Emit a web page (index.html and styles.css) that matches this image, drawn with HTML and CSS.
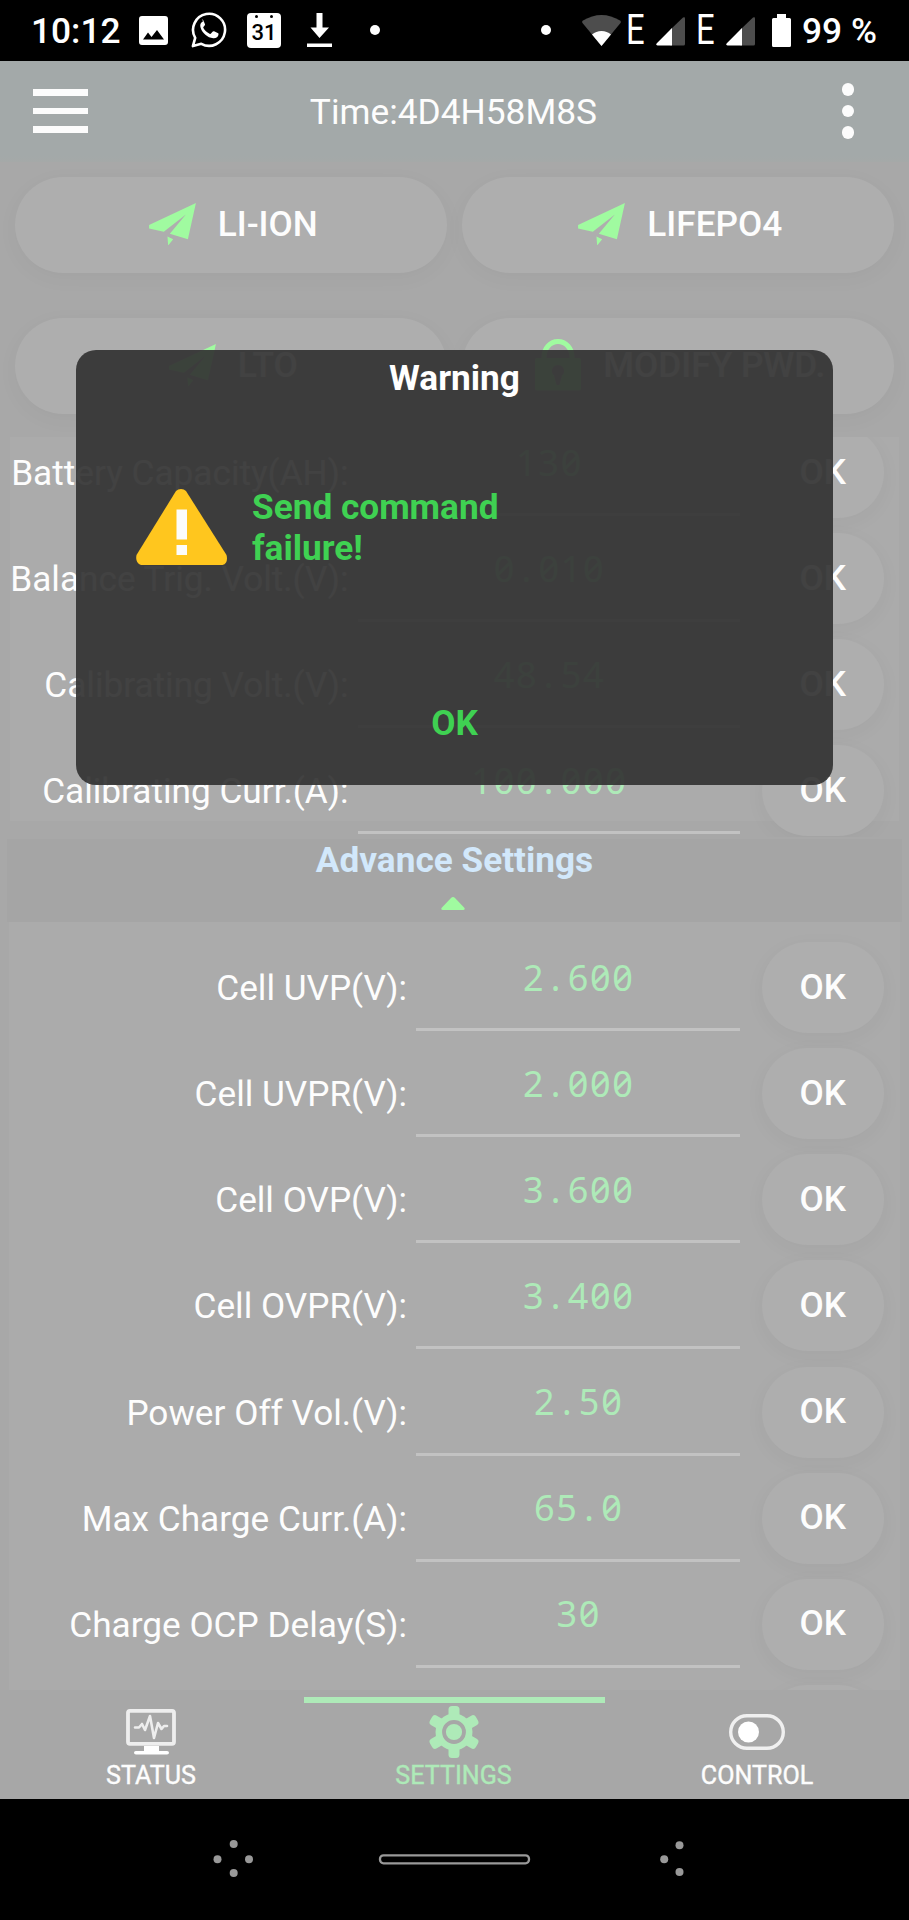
FILE: index.html
```html
<!DOCTYPE html>
<html lang="en">
<head>
<meta charset="utf-8">
<title>Battery settings</title>
<link rel="stylesheet" href="styles.css">
</head>
<body>
<svg class="defs" width="0" height="0">
  <symbol id="plane" viewBox="0 0 140 127"><path d="M140 0 0 66v10l44 10 66-52-48 58 54 16zM55 100l17 8-15 19z"/></symbol>
  <symbol id="signal" viewBox="0 0 29 29"><path fill="#4d4d4d" d="M27 .6Q29-.6 29 1.500V27q0 1.500-1.500 1.500H14V13z"/><path fill="#fff" d="M16 11v17.500H1.500Q-.5 28 .6 26.600z"/></symbol>
</svg>
<div class="screen">
  <header class="status">
    <span class="clock">10:12</span>
    <svg class="ic-photo" viewBox="0 0 29 29"><path fill="#fff" fill-rule="evenodd" d="M3 0h23q3 0 3 3v23q0 3-3 3H3q-3 0-3-3V3q0-3 3-3zM4 23.500h21L18 14l-5.500 7-3.500-4.500z"/></svg>
    <svg class="ic-chat" viewBox="0 0 36 36"><path fill="none" stroke="#fff" stroke-width="2.600" stroke-linejoin="round" d="M1.900 34.100 4.200 25.800A16 16 0 1 1 10.300 31.800z"/><path fill="#fff" d="M11.800 9.800c-3 1.200-3.500 4-2.600 6.600 1.800 5.200 6.600 9.600 12.600 10.300 2.800.2 5-1.500 5.200-3.700.1-.9 0-1.100-.8-1.500l-3.600-1.700c-.7-.3-1.100-.2-1.600.4l-1.500 1.800c-.4.5-.8.5-1.400.2-2.900-1.300-4.900-3.200-6.200-5.600-.3-.6-.2-.9.2-1.300l1.200-1.500c.3-.4.3-.8.1-1.300l-1.500-3.600c-.4-.8-.9-.9-1.600-.9z" transform="translate(.5 -.5)"/></svg>
    <span class="calendar"><i></i><i></i><b>31</b></span>
    <svg class="ic-down" viewBox="0 0 25 34"><path fill="#fff" d="M9.500 0h6v14.500H22L12.500 25 3.500 14.500h6zM0 30.500h25V34H0z"/></svg>
    <i class="dot"></i>
    <i class="dot dot-right"></i>
    <svg class="ic-wifi" viewBox="0 0 39 31"><path fill="#4d4d4d" d="M19.500 31 .5 8Q-.4 6.500 1 5.600 10 0 19.500 0T38 5.600q1.400.9.500 2.400z"/><path fill="#fff" d="M19.500 31 10 19.500Q14 16 19.500 16t9.500 3.500z"/></svg>
    <span class="edge"><span>E</span></span>
    <svg class="ic-signal"><use href="#signal"/></svg>
    <span class="edge"><span>E</span></span>
    <svg class="ic-signal"><use href="#signal"/></svg>
    <svg class="ic-battery" viewBox="0 0 19 33"><path fill="#fff" d="M5 0h9v4h3.500Q19 4 19 5.500v26q0 1.500-1.500 1.500h-16Q0 33 0 31.500v-26Q0 4 1.500 4H5z"/></svg>
    <span class="percent">99 %</span>
  </header>

  <div class="toolbar">
    <div class="menu"><i></i><i></i><i></i></div>
    <div class="title">Time:4D4H58M8S</div>
    <div class="more"><i></i><i></i><i></i></div>
  </div>

  <main>
    <div class="presets">
      <div class="pill"><svg class="plane"><use href="#plane"/></svg><span>LI-ION</span></div>
      <div class="pill"><svg class="plane"><use href="#plane"/></svg><span>LIFEPO4</span></div>
      <div class="pill"><svg class="plane"><use href="#plane"/></svg><span>LTO</span></div>
      <div class="pill"><svg class="lock" viewBox="0 0 46 52"><path fill="none" stroke="#a0fba0" stroke-width="5" d="M9 20v-2a14 15.500 0 0 1 28 0v2"/><path fill="#a0fba0" fill-rule="evenodd" d="M2 19h42q2 0 2 2v28.500q0 2-2 2H2q-2 0-2-2V21q0-2 2-2zM23 26a6 6 0 0 0-4 10.500L21.500 46h3l2.500-9.500A6 6 0 0 0 23 26z"/></svg><span>MODIFY PWD.</span></div>
    </div>

    <section class="basic"><div class="rows">
      <div class="row"><span class="label">Battery Capacity(AH):</span><span class="value">130</span><span class="ok">OK</span></div>
      <div class="row"><span class="label">Balance Trig. Volt.(V):</span><span class="value">0<i>.</i>010</span><span class="ok">OK</span></div>
      <div class="row"><span class="label">Calibrating Volt.(V):</span><span class="value">48<i>.</i>54</span><span class="ok">OK</span></div>
      <div class="row"><span class="label">Calibrating Curr.(A):</span><span class="value">100<i>.</i>000</span><span class="ok">OK</span></div>
    </div></section>

    <div class="divider"><h2>Advance Settings</h2><svg viewBox="0 0 24 13"><path fill="#a0fba0" d="M12 0q1 0 2 1l9.500 10q.8 2-1.500 2H2q-2.300 0-1.500-2L10 1q1-1 2-1z"/></svg></div>

    <section class="advanced">
      <div class="row"><span class="label">Cell UVP(V):</span><span class="value">2<i>.</i>600</span><span class="ok">OK</span></div>
      <div class="row"><span class="label">Cell UVPR(V):</span><span class="value">2<i>.</i>000</span><span class="ok">OK</span></div>
      <div class="row"><span class="label">Cell OVP(V):</span><span class="value">3<i>.</i>600</span><span class="ok">OK</span></div>
      <div class="row"><span class="label">Cell OVPR(V):</span><span class="value">3<i>.</i>400</span><span class="ok">OK</span></div>
      <div class="row"><span class="label">Power Off Vol.(V):</span><span class="value">2<i>.</i>50</span><span class="ok">OK</span></div>
      <div class="row"><span class="label">Max Charge Curr.(A):</span><span class="value">65<i>.</i>0</span><span class="ok">OK</span></div>
      <div class="row"><span class="label">Charge OCP Delay(S):</span><span class="value">30</span><span class="ok">OK</span></div>
      <div class="row"><span class="label"></span><span class="value"></span><span class="ok"></span></div>
    </section>
  </main>

  <nav class="tabs">
    <div class="tab">
      <svg viewBox="0 0 56 52"><g fill="none" stroke="#eee"><rect x="5" y="4.800" width="46" height="33" rx="2" stroke-width="3.800"/><path stroke-width="2.600" stroke-linejoin="round" stroke-linecap="round" d="M12 21.500h4l3-3.500 3 6 5-14 4 22 4-15 3.500 6 2.500-3h3"/></g><path fill="#fff" d="M21 40h15v5h8q2 0 2 1.700T44 48.500H13q-2 0-2-1.800t2-1.700h8z"/></svg>
      <span>STATUS</span>
    </div>
    <div class="tab active">
      <svg viewBox="0 0 56 52"><g fill="#aeeab8"><circle cx="28" cy="26" r="18.500"/><rect x="22.500" y="0" width="11" height="52" rx="3.500"/><rect x="22.500" y="-.5" width="11" height="53" rx="3.500" transform="rotate(60 28 26)"/><rect x="22.500" y="-.5" width="11" height="53" rx="3.500" transform="rotate(120 28 26)"/></g><circle cx="28" cy="26" r="10" fill="#aeeab8" stroke="#a7a7a7" stroke-width="3.800"/></svg>
      <span>SETTINGS</span>
    </div>
    <div class="tab">
      <svg viewBox="0 0 56 52"><rect x="1.700" y="9.700" width="52.600" height="32.600" rx="16.300" fill="none" stroke="#f0f0f0" stroke-width="3.400"/><circle cx="19.500" cy="26" r="10.500" fill="#fff"/></svg>
      <span>CONTROL</span>
    </div>
  </nav>

  <footer class="sysnav">
    <svg viewBox="0 0 909 121"><g fill="#999"><circle cx="233.700" cy="45" r="4"/><circle cx="217.500" cy="60.300" r="4"/><circle cx="249" cy="60.300" r="4"/><circle cx="233.700" cy="74" r="4"/><circle cx="679.500" cy="46.300" r="4"/><circle cx="664.200" cy="60.300" r="4"/><circle cx="679.500" cy="73" r="4"/></g><rect x="380" y="56.300" width="149" height="8" rx="3.500" fill="none" stroke="#999" stroke-width="2.300"/></svg>
  </footer>

  <div class="dialog">
    <div class="dialog-title">Warning</div>
    <div class="dialog-body">
      <svg viewBox="0 0 91 76"><path fill="#ffc61e" d="M40 2q2-2 5-2t5 2l40.500 64q2 8-4 10H5q-6-2-4.500-10z"/><path fill="#fcfcfc" d="M40.500 20.500h10.500v30H40.500zM40.500 56h10.500v10H40.500z"/></svg>
      <p>Send command<br>failure!</p>
    </div>
    <div class="dialog-ok">OK</div>
  </div>
</div>
</body>
</html>
```
FILE: styles.css
```css
* { box-sizing: border-box; }
body { margin: 0; background: #000; font-family: Roboto, sans-serif; color: #fdfdfd; }
i { font-style: normal; }
svg { display: block; flex: none; }
.defs { position: absolute; }
.screen { position: relative; width: 909px; height: 1920px; overflow: hidden; display: flex; flex-direction: column; background: #a8a8a8; }

.status { height: 60.500px; flex: none; background: #000; display: flex; align-items: center; padding-left: 31px; color: #fff; font-size: 35.300px; font-weight: 500; white-space: nowrap; }
.clock { width: 108px; padding-top: 2px; }
.ic-photo { width: 29px; height: 29px; }
.ic-chat { width: 36px; height: 36px; margin-left: 23px; }
.calendar { width: 34px; height: 35px; margin-left: 20px; background: #fff; border-radius: 4px; display: flex; flex-wrap: wrap; justify-content: space-between; padding: 2px 8px 0; color: #000; }
.calendar i { width: 3px; height: 3px; border-radius: 50%; background: #000; }
.calendar b { width: 34px; margin: 0 -8px; font-size: 22px; line-height: 25px; font-weight: 500; text-align: center; }
.ic-down { width: 25px; height: 34px; margin-left: 26px; }
.dot { width: 10px; height: 10px; border-radius: 50%; background: #fff; margin-left: 38px; }
.dot-right { margin-left: 161px; }
.ic-wifi { width: 39px; height: 31px; margin-left: 31px; }
.edge { width: 17px; margin-left: 5px; font-size: 42px; font-weight: 400; line-height: 60px; }
.edge span { display: inline-block; transform: scaleX(.78); transform-origin: 0 0; }
.ic-signal { width: 29px; height: 29px; margin-left: 13px; margin-top: 2px; }
.ic-signal + .edge { margin-left: 11px; }
.ic-battery { width: 19px; height: 33px; margin-left: 17px; }
.percent { margin-left: 11px; padding-top: 2px; }

.toolbar { height: 101px; flex: none; background: linear-gradient(#a3a9a9 94%, #a5a9a8); display: flex; align-items: center; justify-content: space-between; padding: 0 54.500px 0 33px; }
.menu, .more { display: flex; flex-direction: column; }
.menu { width: 55px; gap: 12px; }
.menu i { height: 6.400px; background: #fcfcfc; }
.title { font-size: 35.300px; line-height: 42px; margin-top: 1px; padding-right: 1px; margin-left: -22px; }
.more { gap: 8.700px; }
.more i { width: 12.600px; height: 12.600px; border-radius: 50%; background: #fcfcfc; }

main { height: 1528.500px; flex: none; display: flex; flex-direction: column; }
.presets { display: grid; grid-template-columns: 431.500px 431.500px; grid-auto-rows: 96px; gap: 45px 15.500px; padding: 15.500px 15px 0; }
.pill, .ok { background: #aeaeae; box-shadow: 0 5px 22px rgba(0,0,0,.035); font-weight: 500; font-size: 35.200px; display: flex; align-items: center; justify-content: center; white-space: nowrap; }
.pill { border-radius: 48px; padding-left: 5px; gap: 22px; line-height: 42px; padding-bottom: 2px; }
.plane { width: 47px; height: 42.500px; fill: #a0fba0; }
.lock { width: 46px; height: 52px; }

.basic { margin: 23px 10px 0; height: 400px; flex: none; overflow: hidden; background: linear-gradient(#ababab, #ababab) 0 0 / 100% 384px no-repeat; }
.rows { margin-top: -17.500px; }
.row { height: 106.150px; display: grid; grid-template-columns: 398px 323.500px 121.500px; column-gap: 9px; align-items: center; }
.basic .row { grid-template-columns: 340px 382px 121.500px; height: 106px; column-gap: 0; }
.label { text-align: right; font-size: 35.200px; line-height: 42px; white-space: nowrap; padding-top: 1px; }
.basic .label { padding-right: 1.500px; }
.basic .value { margin-left: 8px; width: 382px; padding-left: 1px; }
.value { align-self: start; height: 96.500px; border-bottom: 3px solid #c2c2c2; padding: 1px 0 9px 2px; line-height: 83.500px; text-align: center; font-family: "Noto Sans", sans-serif; font-size: 36px; letter-spacing: 1.700px; font-feature-settings: "zero"; color: #aeeab8; }
.value i { display: inline-block; width: 22.500px; }
.ok { height: 91px; border-radius: 46px; padding-bottom: 2px; }
.basic .ok { margin-left: 30px; width: 121.500px; }
.advanced .ok { margin-left: 13.500px; width: 121.500px; }

.divider { height: 83px; margin: 2px 7px 0; flex: none; background: #a5a5a5; display: flex; flex-direction: column; align-items: center; }
.divider h2 { margin: 0; font-size: 35.200px; line-height: 42px; font-weight: 700; color: #d2e8fb; }
.divider svg { width: 24px; height: 13px; margin: 16px 3px 0 0; }
.advanced { height: 768px; flex: none; margin: 0 9px; padding-top: 12.500px; overflow: hidden; background: #ababab; }

.tabs { height: 108.500px; flex: none; background: #a7a7a7; display: grid; grid-template-columns: 302px 303px 304px; }
.tab { display: flex; flex-direction: column; align-items: center; padding-top: 15.500px; font-size: 25.100px; font-weight: 400; -webkit-text-stroke: .4px currentColor; line-height: 30px; }
.tab svg { width: 56px; height: 52px; }
.tab span { margin-top: 3.500px; }
.active { margin-left: 2px; border-top: 6px solid #aeeab8; margin-top: 7px; padding: 2.500px 2px 0 0; color: #aeeab8; }
.sysnav { flex: 1; background: #000; }
.sysnav svg { width: 909px; height: 121px; }

.dialog { position: absolute; left: 76px; top: 350px; width: 757px; height: 435px; border-radius: 20px; background: rgba(52,52,52,.93); display: flex; flex-direction: column; font-weight: 700; font-size: 35.200px; line-height: 41px; color: #3fd152; }
.dialog-title { color: #fff; text-align: center; padding-top: 8px; }
.dialog-body { display: flex; gap: 25px; padding: 89px 0 0 60px; }
.dialog-body svg { width: 91px; height: 76px; margin-top: 1px; }
.dialog-body p { margin: -1px 0 0; }
.dialog-ok { text-align: center; margin-top: 134px; }
```
